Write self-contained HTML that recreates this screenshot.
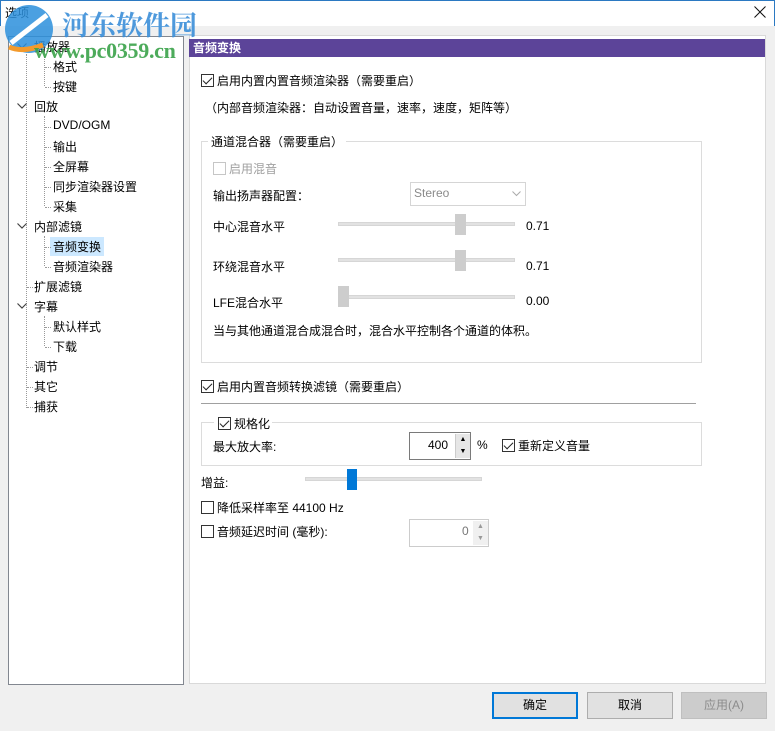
<!DOCTYPE html>
<html><head><meta charset="utf-8"><style>
*{margin:0;padding:0;box-sizing:border-box}
body{width:775px;height:731px;background:#f0f0f0;font-family:"Liberation Sans","Noto Sans CJK SC",sans-serif;font-size:12px;color:#000;position:relative;overflow:hidden}
.a{position:absolute;white-space:nowrap}
.cb{position:absolute;width:13px;height:13px;border:1px solid #333;background:#fff}
.cb.c::after{content:"";position:absolute;left:3px;top:0px;width:4px;height:8px;border:solid #222;border-width:0 1.5px 1.5px 0;transform:rotate(45deg)}
.track{position:absolute;height:4px;background:#e2e2e2;border:1px solid #d6d6d6}
.th{position:absolute;width:11px;height:21px;background:#cdcdcd}
.btn{position:absolute;top:692px;height:27px;width:86px;border:1px solid #adadad;background:#e1e1e1;text-align:center;line-height:25px}
.dot{position:absolute;border-left:1px dotted #999}
.hd{position:absolute;border-top:1px dotted #999}
</style></head><body>
<div class="a" style="left:0;top:0;width:775px;height:26px;background:#fff;border:1px solid #2b79c2;border-bottom:none"></div>
<div class="a" style="left:5px;top:4px">选项</div>
<svg class="a" style="left:754px;top:6px" width="12" height="12"><path d="M0.5 0.5L11.5 11.5M11.5 0.5L0.5 11.5" stroke="#111" stroke-width="1"/></svg>
<!-- tree -->
<div class="a" style="left:8px;top:36px;width:176px;height:649px;background:#fff;border:1px solid #828790"></div>
<div class="dot" style="left:26px;top:54px;height:354px"></div>
<div class="dot" style="left:44px;top:56px;height:30px"></div>
<div class="dot" style="left:44px;top:116px;height:90px"></div>
<div class="dot" style="left:44px;top:236px;height:30px"></div>
<div class="dot" style="left:44px;top:316px;height:30px"></div>
<div class="a" style="left:50px;top:237px;width:54px;height:19px;background:#cce8ff"></div>
<div id="tree"></div>
<!-- right panel -->
<div class="a" style="left:189px;top:35px;width:577px;height:649px;background:#fff;border:1px solid #d9d9d9"></div>
<div class="a" style="left:189px;top:39px;width:576px;height:18px;background:#5c4499"></div>
<div class="a" style="left:193px;top:39px;color:#fff;font-weight:bold;line-height:18px">音频变换</div>
<div class="cb c" style="left:201px;top:74px"></div>
<div class="a" style="left:217px;top:72px">启用内置内置音频渲染器（需要重启）</div>
<div class="a" style="left:205px;top:99px">（内部音频渲染器：自动设置音量，速率，速度，矩阵等）</div>
<div class="a" style="left:201px;top:141px;width:501px;height:222px;border:1px solid #dcdcdc"></div>
<div class="a" style="left:208px;top:133px;background:#fff;padding:0 3px">通道混合器（需要重启）</div>
<div class="cb" style="left:213px;top:162px;border-color:#c6c6c6"></div>
<div class="a" style="left:229px;top:160px;color:#a0a0a0">启用混音</div>
<div class="a" style="left:213px;top:187px">输出扬声器配置：</div>
<div class="a" style="left:410px;top:182px;width:116px;height:24px;border:1px solid #d5d5d5;background:#fff"></div>
<div class="a" style="left:414px;top:186px;color:#8a8a8a">Stereo</div>
<svg class="a" style="left:512px;top:191px" width="9" height="6"><path d="M0.5 0.5L4.5 4.5L8.5 0.5" stroke="#aaa" fill="none"/></svg>
<div class="a" style="left:213px;top:218px">中心混音水平</div>
<div class="track" style="left:338px;top:222px;width:177px"></div>
<div class="th" style="left:455px;top:214px"></div>
<div class="a" style="left:526px;top:219px">0.71</div>
<div class="a" style="left:213px;top:258px">环绕混音水平</div>
<div class="track" style="left:338px;top:258px;width:177px"></div>
<div class="th" style="left:455px;top:250px"></div>
<div class="a" style="left:526px;top:259px">0.71</div>
<div class="a" style="left:213px;top:294px">LFE混合水平</div>
<div class="track" style="left:338px;top:295px;width:177px"></div>
<div class="th" style="left:338px;top:286px"></div>
<div class="a" style="left:526px;top:294px">0.00</div>
<div class="a" style="left:213px;top:322px">当与其他通道混合成混合时，混合水平控制各个通道的体积。</div>
<div class="cb c" style="left:201px;top:380px"></div>
<div class="a" style="left:217px;top:378px">启用内置音频转换滤镜（需要重启）</div>
<div class="a" style="left:201px;top:403px;width:495px;height:1px;background:#a0a0a0"></div>
<div class="a" style="left:201px;top:422px;width:501px;height:44px;border:1px solid #dcdcdc"></div>
<div class="a" style="left:214px;top:414px;width:58px;height:16px;background:#fff"></div>
<div class="cb c" style="left:218px;top:417px"></div>
<div class="a" style="left:234px;top:415px">规格化</div>
<div class="a" style="left:213px;top:438px">最大放大率:</div>
<div class="a" style="left:409px;top:432px;width:62px;height:28px;border:1px solid #7a7a7a;background:#fff"></div>
<div class="a" style="left:428px;top:438px">400</div>
<div class="a" style="left:455px;top:434px;width:15px;height:24px;background:#e6e6e6;border-left:1px solid #ccc;font-size:7px;text-align:center;line-height:12px">▲<br>▼</div>
<div class="a" style="left:477px;top:438px">%</div>
<div class="cb c" style="left:502px;top:439px"></div>
<div class="a" style="left:518px;top:437px">重新定义音量</div>
<div class="a" style="left:201px;top:474px">增益:</div>
<div class="track" style="left:305px;top:477px;width:177px"></div>
<div class="a" style="left:347px;top:469px;width:10px;height:21px;background:#0078d7"></div>
<div class="cb" style="left:201px;top:501px"></div>
<div class="a" style="left:217px;top:499px">降低采样率至 44100 Hz</div>
<div class="cb" style="left:201px;top:525px"></div>
<div class="a" style="left:217px;top:523px">音频延迟时间 (毫秒):</div>
<div class="a" style="left:409px;top:519px;width:80px;height:28px;border:1px solid #ccc;background:#fff"></div>
<div class="a" style="left:462px;top:524px;color:#777">0</div>
<div class="a" style="left:473px;top:521px;width:15px;height:24px;background:#f0f0f0;font-size:7px;color:#999;text-align:center;line-height:12px">▲<br>▼</div>
<!-- buttons -->
<div class="btn" style="left:492px;border:2px solid #0078d7;line-height:23px">确定</div>
<div class="btn" style="left:587px">取消</div>
<div class="btn" style="left:681px;color:#8c8c8c;background:#cccccc;border-color:#bfbfbf">应用(A)</div>
<!-- watermark -->
<svg class="a" style="left:3px;top:3px" width="56" height="52"><circle cx="26" cy="26" r="24" fill="#2b8fdc" opacity=".85"/><path d="M8 40 L44 12" stroke="#fff" stroke-width="5"/><path d="M6 44 Q20 50 40 42" stroke="#f39a2c" stroke-width="5" fill="none"/></svg>
<div class="a" style="left:62px;top:4px;font-size:27px;font-weight:bold;color:#3b8fd9;font-family:'Noto Serif CJK SC',serif;opacity:.9">河东软件园</div>
<div class="a" style="left:34px;top:38px;font-size:22px;font-weight:bold;color:#3aa34a;font-family:'Liberation Serif',serif;opacity:.9;letter-spacing:-0.3px">www.pc0359.cn</div>
<script>
var it=[["播放器",1,1],["格式",2],["按键",2],["回放",1,1],["DVD/OGM",2],["输出",2],["全屏幕",2],["同步渲染器设置",2],["采集",2],["内部滤镜",1,1],["音频变换",2],["音频渲染器",2],["扩展滤镜",1],["字幕",1,1],["默认样式",2],["下载",2],["调节",1],["其它",1],["捕获",1]];
var h="";it.forEach(function(e,i){var t=e[0];var y=38+i*20;var x=e[1]==1?34:53;
if(e[1]==2)h+='<div class="hd" style="left:45px;top:'+(y+9)+'px;width:6px"></div>';else if(!e[2])h+='<div class="hd" style="left:27px;top:'+(y+9)+'px;width:6px"></div>';
if(e[2])h+='<svg class="a" style="left:17px;top:'+(y+5)+'px" width="10" height="7"><path d="M0.5 0.5L5 5L9.5 0.5" stroke="#444" stroke-width="1.2" fill="none"/></svg>';
h+='<div class="a" style="left:'+x+'px;top:'+y+'px">'+t+'</div>'});
document.getElementById("tree").innerHTML=h;
</script>
</body></html>
